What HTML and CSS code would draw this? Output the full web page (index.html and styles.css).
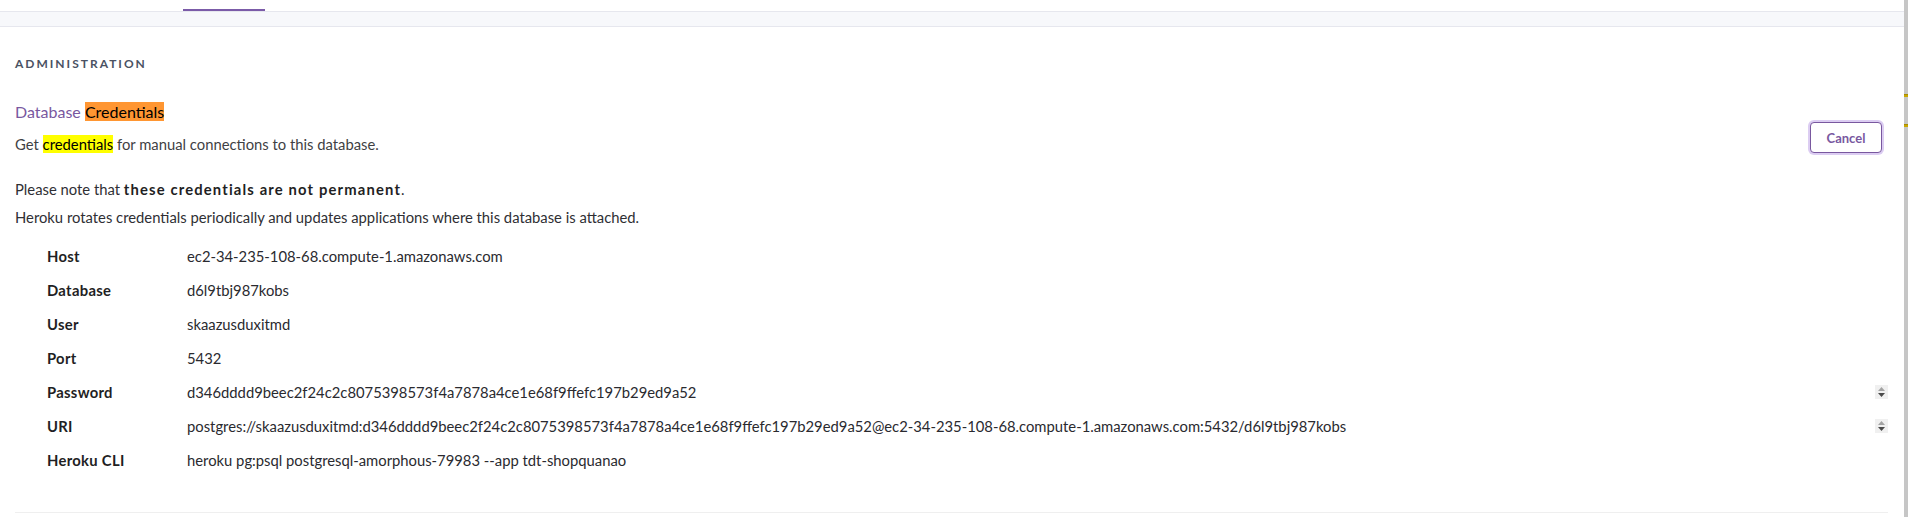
FILE: index.html
```html
<!DOCTYPE html>
<html lang="en">
<head>
<meta charset="utf-8">
<title>Database Credentials</title>
<link rel="stylesheet" href="styles.css">
</head>
<body>
<div class="shell">
  <div class="main">
    <nav class="tabs"><span class="tab-active"></span></nav>
    <div class="band"></div>
    <section class="panel">
      <h2 class="section-title">Administration</h2>
      <div class="header-row">
        <div class="header-text">
          <h3 class="title"><span class="purple">Database</span> <mark class="hl-orange">Credentials</mark></h3>
          <p class="desc">Get <mark class="hl-yellow">credentials</mark> for manual connections to this database.</p>
        </div>
        <button class="btn-cancel" type="button">Cancel</button>
      </div>
      <p class="note">Please note that <strong>these credentials are not permanent</strong>.</p>
      <p class="note">Heroku rotates credentials periodically and updates applications where this database is attached.</p>
      <div class="creds">
        <div class="label">Host</div><div class="value">ec2-34-235-108-68.compute-1.amazonaws.com</div><div class="ctrl"></div>
        <div class="label">Database</div><div class="value">d6l9tbj987kobs</div><div class="ctrl"></div>
        <div class="label">User</div><div class="value">skaazusduxitmd</div><div class="ctrl"></div>
        <div class="label">Port</div><div class="value">5432</div><div class="ctrl"></div>
        <div class="label">Password</div><div class="value">d346dddd9beec2f24c2c8075398573f4a7878a4ce1e68f9ffefc197b29ed9a52</div><div class="ctrl"><span class="spin"><svg width="13" height="14" viewBox="0 0 13 14"><path d="M6.5 2 L10 6 L3 6 Z" fill="#a3a3a3"/><path d="M3 8 L10 8 L6.5 12 Z" fill="#4a4a4a"/></svg></span></div>
        <div class="label">URI</div><div class="value">postgres://skaazusduxitmd:d346dddd9beec2f24c2c8075398573f4a7878a4ce1e68f9ffefc197b29ed9a52@ec2-34-235-108-68.compute-1.amazonaws.com:5432/d6l9tbj987kobs</div><div class="ctrl"><span class="spin"><svg width="13" height="14" viewBox="0 0 13 14"><path d="M6.5 2 L10 6 L3 6 Z" fill="#a3a3a3"/><path d="M3 8 L10 8 L6.5 12 Z" fill="#4a4a4a"/></svg></span></div>
        <div class="label">Heroku CLI</div><div class="value">heroku pg:psql postgresql-amorphous-79983 --app tdt-shopquanao</div><div class="ctrl"></div>
      </div>
      <div class="divider"></div>
    </section>
  </div>
  <aside class="scrollbar">
    <span class="mark mark-1"></span>
    <span class="mark mark-2"></span>
  </aside>
</div>
</body>
</html>
```
FILE: styles.css
```css
* { box-sizing: border-box; }
html, body { margin: 0; padding: 0; background: #fff; }
body {
  font-family: Lato, "Noto Sans", sans-serif;
  font-size: 14.8px;
  color: #3f3f44;
  height: 517px;
  overflow: hidden;
}
.shell { display: flex; height: 517px; }
.main { flex: 1; min-width: 0; }
.scrollbar {
  position: relative;
  width: 4px;
  background: #c6c6c6;
}
.mark {
  position: absolute;
  left: 0;
  width: 4px;
  height: 3px;
  background: #c9a800;
  border-top: 1px solid #a88c00;
}
.mark-1 { top: 94px; }
.mark-2 { top: 124px; }

.tabs {
  height: 11px;
  display: flex;
  align-items: flex-end;
  padding-left: 183px;
}
.tab-active {
  display: block;
  width: 82px;
  height: 2px;
  background: #7b5ba8;
}
.band {
  height: 16px;
  background: #f7f8fb;
  border-top: 1px solid #e6e7ee;
  border-bottom: 1px solid #e6e7ee;
}
.panel {
  padding: 0 16px 0 15px;
}
.section-title {
  margin: 29px 0 0;
  font-size: 12px;
  line-height: 16px;
  font-weight: 700;
  letter-spacing: 2px;
  text-transform: uppercase;
  color: #4a5263;
}
.header-row {
  display: flex;
  justify-content: space-between;
  align-items: flex-end;
  margin-top: 29px;
}
.title {
  margin: 0;
  font-size: 16px;
  line-height: 22px;
  font-weight: 400;
}
.purple { color: #79589f; }
.hl-orange { background: #ff9632; color: #000; }
.hl-yellow { background: #ffff00; color: #000; }
.desc {
  margin: 11px 0 0;
  line-height: 20px;
}
.btn-cancel {
  font-family: Lato, "Noto Sans", sans-serif;
  font-size: 13px;
  font-weight: 700;
  color: #79589f;
  background: #fff;
  border: 1px solid #79589f;
  border-radius: 4px;
  box-shadow: 0 0 0 2px #dccdf2;
  width: 72px;
  height: 31px;
  padding: 0;
  margin: 0 6px 1px 0;
}
.note {
  margin: 0;
  line-height: 20px;
  color: #2f2f34;
}
.header-row + .note { margin-top: 25px; }
.note + .note { margin-top: 8px; }
.note strong { font-weight: 700; color: #1f1f24; letter-spacing: 1.15px; }

.creds {
  display: grid;
  grid-template-columns: 140px 1fr auto;
  grid-auto-rows: 34px;
  align-items: center;
  margin-top: 12px;
  padding-left: 32px;
}
.label {
  font-weight: 700;
  color: #1f1f24;
  letter-spacing: 0.3px;
}
.value { color: #2a2a2f; white-space: nowrap; }
.ctrl { display: flex; align-items: center; }
.spin {
  display: flex;
  width: 13px;
  height: 14px;
  background: #f0f0f0;
}
.divider {
  margin-top: 35px;
  height: 1px;
  background: #efefef;
}
```
